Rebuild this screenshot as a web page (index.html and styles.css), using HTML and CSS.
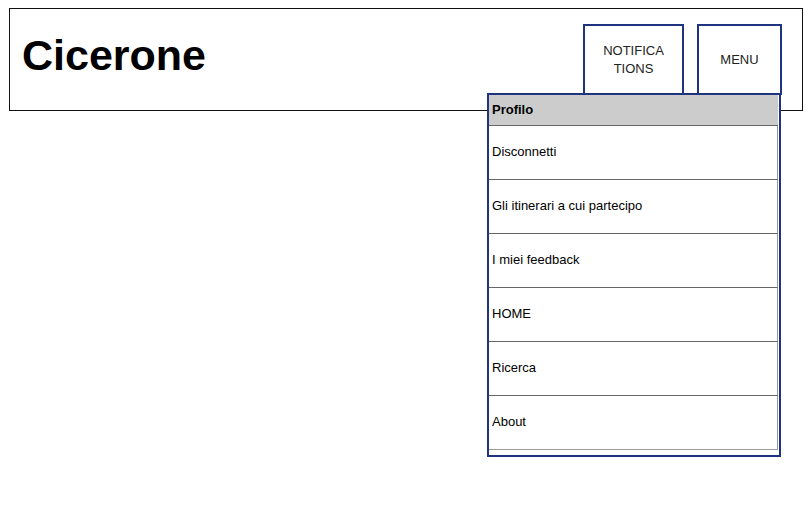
FILE: index.html
```html
<!DOCTYPE html>
<html lang="it">
<head>
<meta charset="utf-8">
<title>Cicerone</title>
<link rel="stylesheet" href="styles.css">
</head>
<body>
<header class="topbar">
  <h1 class="brand">Cicerone</h1>
  <div class="actions">
    <button class="btn btn-notif">NOTIFICATIONS</button>
    <button class="btn btn-menu">MENU</button>
  </div>
</header>
<nav class="dropdown">
  <div class="dd-head">Profilo</div>
  <div class="dd-item">Disconnetti</div>
  <div class="dd-item">Gli itinerari a cui partecipo</div>
  <div class="dd-item">I miei feedback</div>
  <div class="dd-item">HOME</div>
  <div class="dd-item">Ricerca</div>
  <div class="dd-item dd-last">About</div>
</nav>
</body>
</html>
```
FILE: styles.css
```css
html, body {
  margin: 0;
  padding: 0;
  background: #fff;
  font-family: "Liberation Sans", Arial, sans-serif;
}

.topbar {
  box-sizing: border-box;
  margin: 8px 8px 0 9px;
  height: 103px;
  border: 1px solid #111;
  display: flex;
  align-items: flex-start;
  padding: 15px 20px 0 12px;
}

.brand {
  margin: 10px 0 0 0;
  font-size: 43px;
  line-height: 43px;
  font-weight: bold;
  color: #000;
}

.actions {
  margin-left: auto;
  display: flex;
  gap: 13px;
}

.btn {
  box-sizing: border-box;
  height: 71px;
  border: 2px solid #1e3480;
  background: #fff;
  font-family: "Liberation Sans", Arial, sans-serif;
  font-size: 13px;
  line-height: 18px;
  color: #222;
  display: flex;
  align-items: center;
  justify-content: center;
  text-align: center;
  padding: 0;
}

.btn-notif {
  width: 101px;
  padding: 0 16px;
  word-break: break-all;
}

.btn-menu {
  width: 85px;
}

.dropdown {
  position: absolute;
  left: 487px;
  top: 93px;
  width: 294px;
  height: 364px;
  box-sizing: border-box;
  border: 2px solid #1e3480;
  background: #fff;
  font-size: 13px;
  color: #000;
}

.dd-head {
  box-sizing: border-box;
  width: 289px;
  height: 31px;
  background: #cccccc;
  border-bottom: 1px solid #666;
  font-weight: bold;
  padding: 0 0 2px 3px;
  display: flex;
  align-items: center;
}

.dd-item {
  box-sizing: border-box;
  width: 289px;
  height: 54px;
  border-bottom: 1px solid #666;
  border-right: 1px solid #999;
  padding: 0 0 2px 3px;
  display: flex;
  align-items: center;
}

.dd-last {
  border-bottom-color: #999;
}
```
